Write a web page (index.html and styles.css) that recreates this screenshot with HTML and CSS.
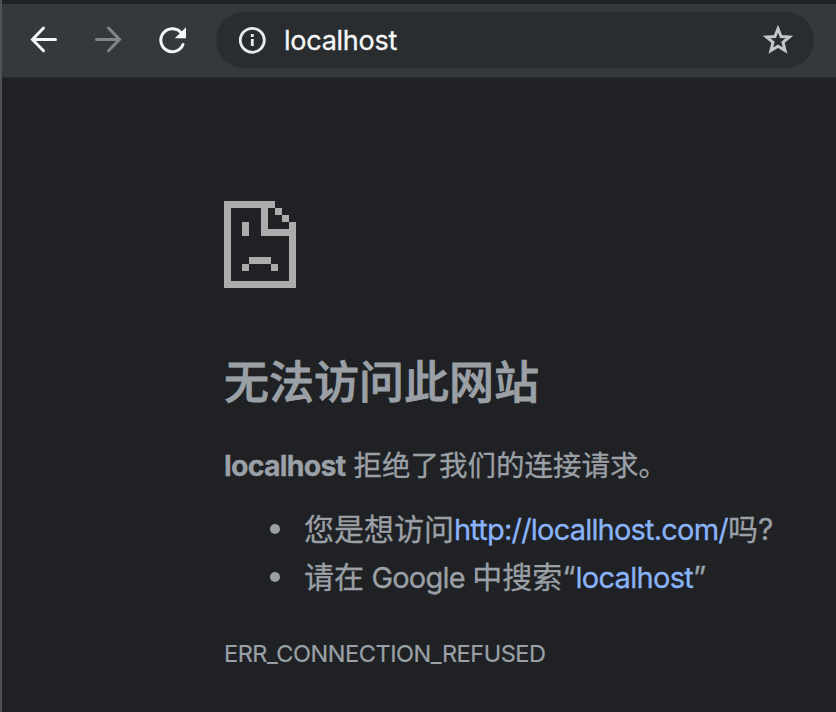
FILE: index.html
```html
<!DOCTYPE html>
<html lang="zh-CN">
<head>
<meta charset="utf-8">
<title>localhost</title>
<link rel="stylesheet" href="styles.css">
</head>
<body>
<div class="window">
  <header class="toolbar">
    <svg class="nav" viewBox="0 0 32 32"><path d="M27.500 15.500H4.500M15.500 4L4.500 15.500 15.500 26.800"/></svg>
    <svg class="nav disabled" viewBox="0 0 32 32"><path d="M4.500 15.500H27.500M16.500 4L27.500 15.500 16.500 26.800"/></svg>
    <svg class="nav" viewBox="0 0 32 32"><path d="M27 20.500A11.500 11.500 0 1 1 24.800 8.400"/><path class="fill" d="M30 3.200v11H18.800z"/></svg>
    <div class="omnibox">
      <svg class="info" viewBox="0 0 28 28"><circle cx="14.300" cy="14.300" r="12"/><path d="M14.300 13v7M14.300 8v3"/></svg>
      <span class="url">localhost</span>
      <svg class="star" viewBox="0 0 32 32"><path d="M16 4.800l3.100 7.700 8.300.6-6.400 5.300 2.100 8.200L16 22.200l-7.100 4.400 2.100-8.200-6.400-5.300 8.300-.6z"/></svg>
    </div>
  </header>
  <main class="page">
    <svg class="sad" viewBox="0 0 72 87" shape-rendering="crispEdges"><path d="M0 0h51v7h-7v21h21v-7h7v66H0zM7 7v73h58V35H37V7zM51 7h7v7h-7zM58 14h7v7h-7zM18 21h7v14h-7zM25 56h22v7H25zM18 63h7v7h-7zM47 63h7v7h-7z" fill-rule="evenodd"/></svg>
    <h1>无法访问此网站</h1>
    <p class="summary"><strong>localhost</strong> 拒绝了我们的连接请求。</p>
    <ul>
      <li>您是想访问<a class="site">http://locallhost.com/</a>吗?</li>
      <li>请在 <span class="google">Google</span> 中搜索<q>“</q><a class="term">localhost</a><q>”</q></li>
    </ul>
    <div class="code">ERR_CONNECTION_REFUSED</div>
  </main>
</div>
</body>
</html>
```
FILE: styles.css
```css
* { box-sizing: border-box; }
body {
  margin: 0;
  background: #202124;
  font-family: Inter, "Noto Sans CJK SC", sans-serif;
  color: #9aa0a6;
}
.window {
  height: 712px;
  border-left: 2px solid #505255;
  padding-top: 4px;
  overflow: hidden;
}
.toolbar {
  height: 74px;
  background: #35393b;
  border-bottom: 1px solid #2b2d30;
  display: flex;
  align-items: center;
  padding: 0 22px 1px 26px;
}
.nav {
  width: 32px;
  height: 32px;
  margin-right: 32px;
  fill: none;
  stroke: #f5f6f7;
  stroke-width: 3;
  stroke-linecap: round;
}
.nav .fill { fill: #f5f6f7; stroke: none; }
.nav.disabled { stroke: #828687; }
.omnibox {
  margin-left: -4px;
  flex: 1;
  height: 56px;
  border-radius: 28px;
  background: #292d2f;
  display: flex;
  align-items: center;
  padding: 0 20px 0 22px;
}
.info {
  width: 28px;
  height: 28px;
  fill: none;
  stroke: #e8eaed;
  stroke-width: 2.8;
}
.url {
  margin-left: 18px;
  flex: 1;
  color: #f5f6f7;
  font-size: 27px;
  letter-spacing: -0.25px;
  -webkit-text-stroke: 0.3px;
}
.star {
  width: 32px;
  height: 32px;
  fill: none;
  stroke: #c4c7ca;
  stroke-width: 3;
}
.page { padding: 123px 0 0 222px; }
.sad { display: block; width: 72px; height: 87px; fill: #acacac; }
h1 {
  margin: 62px 0 0;
  font-size: 45px;
  line-height: 66px;
  font-weight: 500;
  -webkit-text-stroke: 0.8px;
}
.summary {
  margin: 27px 0 0;
  font-size: 28.500px;
  line-height: 45px;
  -webkit-text-stroke: 0.3px;
}
.summary strong { font-weight: 700; letter-spacing: -0.750px; }
ul { margin: 17px 0 0; padding: 0; list-style: none; }
li {
  display: flex;
  align-items: baseline;
  height: 48px;
  font-size: 30px;
  line-height: 48px;
  white-space: pre;
  -webkit-text-stroke: 0.3px;
}
li::before {
  content: "";
  width: 10px;
  height: 10px;
  border-radius: 50%;
  background: #9aa0a6;
  margin: 0 24px 0 46px;
  align-self: center;
}
li a, .google { font-size: 29px; letter-spacing: -0.8px; }
.google { margin: 0 -1px; }
li a { color: #8ab4f8; }
li .term { letter-spacing: -0.7px; }
q { quotes: none; }
q::before, q::after { content: none; }
.code {
  margin-top: 35px;
  font-size: 23.500px;
  line-height: 36px;
  letter-spacing: -0.450px;
  -webkit-text-stroke: 0.2px;
}
```
